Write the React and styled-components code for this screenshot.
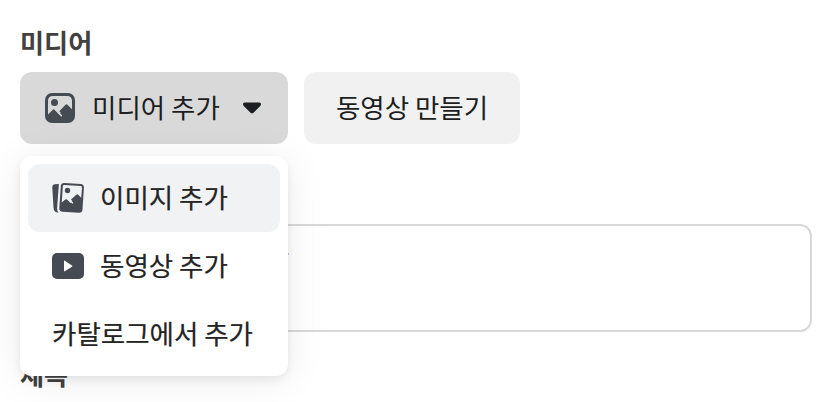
import React, { useState } from 'react'
import styled, { createGlobalStyle } from 'styled-components'

const GlobalStyle = createGlobalStyle`
    * {
        box-sizing: border-box;
    }
    body {
        margin: 0;
        background-color: #ffffff;
        font-family: "Noto Sans CJK KR", sans-serif;
        overflow: hidden;
    }
`
const Form = styled.main`
    height: 402px;
    padding: 22px 10px 0 20px;
    display: flex;
    flex-direction: column;
    overflow: hidden;
`
const Label = styled.div`
    height: 40px;
    line-height: 40px;
    font-size: 26.2px;
    font-weight: 700;
    color: #414141;
    white-space: nowrap;
`
const ButtonRow = styled.div`
    display: flex;
    gap: 16px;
    margin-top: 10px;
`
const MenuAnchor = styled.div`
    position: relative;
`
const Button = styled.button`
    width: ${({$width}) => $width}px;
    height: 72px;
    padding: 0 24px;
    display: flex;
    align-items: center;
    justify-content: ${({$open}) => ($open ? 'flex-start' : 'center')};
    border: none;
    border-radius: 12px;
    background-color: ${({$open}) => ($open ? '#d9d9d9' : '#f1f1f1')};
    color: #1c1e21;
    font-family: inherit;
    font-size: 26.5px;
    line-height: 40px;
    white-space: nowrap;

    svg {
        flex: none;
    }
`
const ButtonText = styled.span`
    margin: ${({$icons}) => ($icons ? '0 22px 0 16px' : '0')};
    padding-bottom: 3px;
`
const Menu = styled.div`
    position: absolute;
    top: 84px;
    left: 0;
    z-index: 10;
    width: 268px;
    height: 220px;
    padding: 8px;
    border-radius: 12px;
    background-color: #ffffff;
    box-shadow: 0 4px 8px rgba(0, 0, 0, 0.07), 0 4px 40px rgba(0, 0, 0, 0.08);
`
const MenuItem = styled.div`
    height: 68px;
    padding: 0 24px;
    display: flex;
    align-items: center;
    gap: 16px;
    border-radius: 12px;
    background-color: ${({$active}) => ($active ? '#f1f2f4' : 'transparent')};
    color: #242424;
    font-size: 26.5px;
    line-height: 40px;
    white-space: nowrap;
    -webkit-text-stroke: 0.2px #242424;

    svg {
        flex: none;
    }
`
const MenuText = styled.span`
    padding-bottom: 3px;
`
const Field = styled.div`
    height: 108px;
    margin: 80px 0 22px;
    padding: 8px 22px;
    border: 2px solid #d8d8d8;
    border-radius: 12px;
`
const Placeholder = styled.div`
    width: 245.5px;
    text-align: right;
    font-size: 26.5px;
    line-height: 40px;
    color: #a0a0a0;
    white-space: nowrap;
`

const ImageIcon = () => (
  <svg width="32" height="32" viewBox="0 0 32 32">
    <path fillRule="evenodd" fill="#464a52" d="M8 1h16a7 7 0 0 1 7 7v16a7 7 0 0 1-7 7H8a7 7 0 0 1-7-7V8a7 7 0 0 1 7-7ZM8.500 4A4.500 4.500 0 0 0 4 8.500V22.500L8.800 17.700Q9.600 17 10.400 17.700L15 22.300L16.700 20.600L15.300 19.200L21.500 12.700Q22.500 11.700 23.500 12.700L28 17.200V8.500A4.500 4.500 0 0 0 23.500 4Z" />
    <path d="m14.200 20.500 3.200 3.100" stroke="#d9d9d9" strokeWidth="1.500" strokeLinecap="round" />
    <circle cx="10.500" cy="10.400" r="3.500" fill="#464a52" />
  </svg>
)

const ImagesIcon = () => (
  <svg width="32" height="32" viewBox="0 0 32 32">
    <path fill="#464a52" d="M6.900 1.900 3 2.300Q.1 2.600.3 5.500L1.500 25.500Q1.800 30.700 6.600 30.700Q5 29.400 5.100 26Z" />
    <path fillRule="evenodd" fill="#464a52" d="M12.500 1 28.700 2.100Q32.100 2.400 31.900 5.800L30.500 27.600Q30.200 31 26.800 30.800L10.500 29.700Q7.100 29.500 7.300 26.100L8.800 4.200Q9 .8 12.500 1ZM12.300 2.900Q11 2.800 10.900 4.100L9.700 20.400L13.300 17.500Q14.400 16.700 15.300 17.700L18.500 21L20.400 19.300L19 17.600L24.400 12.800Q25.500 11.800 26.500 12.900L29.200 15.800L30 5.600Q30.100 4.200 28.700 4.100Z" />
    <path d="m18 18.600 2.600 2.300" stroke="#f1f2f4" strokeWidth="1.300" strokeLinecap="round" />
    <circle cx="15.500" cy="8.500" r="2.700" fill="#464a52" />
  </svg>
)

const VideoIcon = () => (
  <svg width="32" height="32" viewBox="0 0 32 32">
    <rect y="3" width="32" height="26" rx="5" fill="#464a52" />
    <path d="M12 11.200v9.600q0 .8.800.4l7.200-4.500q.8-.7 0-1.300l-7.200-4.600q-.8-.5-.8.400Z" fill="#ffffff" />
  </svg>
)

const CaretIcon = () => (
  <svg width="20" height="14" viewBox="0 0 20 14">
    <path d="M2.600 1.600h14.800q1.600 0 1.600 1.500 0 1.200-1 2.100l-6.300 6.300q-1.700 1.700-3.400 0L2 5.200Q1 4.300 1 3.100q0-1.500 1.600-1.500Z" fill="#1c1e21" />
  </svg>
)

function App() {
  const [open, setOpen] = useState(true)
  const toggleMenu = () => setOpen(!open)
  return (
    <>
    <GlobalStyle />
    <Form>
        <Label>미디어</Label>
        <ButtonRow>
            <MenuAnchor>
                <Button $width={268} $open onClick={toggleMenu}>
                    <ImageIcon />
                    <ButtonText $icons>미디어 추가</ButtonText>
                    <CaretIcon />
                </Button>
                {open && (
                <Menu>
                    <MenuItem $active><ImagesIcon /><MenuText>이미지 추가</MenuText></MenuItem>
                    <MenuItem><VideoIcon /><MenuText>동영상 추가</MenuText></MenuItem>
                    <MenuItem><MenuText>카탈로그에서 추가</MenuText></MenuItem>
                </Menu>
                )}
            </MenuAnchor>
            <Button $width={216}><ButtonText>동영상 만들기</ButtonText></Button>
        </ButtonRow>
        <Field><Placeholder>문구 추가</Placeholder></Field>
        <Label>제목</Label>
    </Form>
    </>
  )
}

export default App
